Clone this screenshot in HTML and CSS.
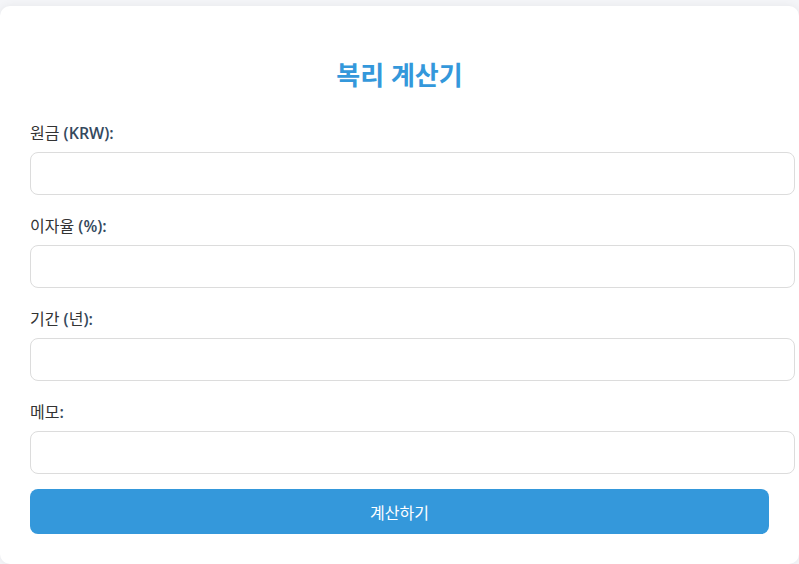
FILE: index.html
```html
<!DOCTYPE html>
<html lang="ko">
<head>
<meta charset="utf-8">
<title>복리 계산기</title>
<link rel="stylesheet" href="styles.css">
</head>
<body>
<div class="card">
  <h2 class="title">복리 계산기</h2>
  <form class="form">
    <div class="field">
      <label class="label" for="principal"><span class="ko">원금</span> (KRW):</label>
      <input class="input" id="principal" type="number">
    </div>
    <div class="field">
      <label class="label" for="rate"><span class="ko">이자율</span> (%):</label>
      <input class="input" id="rate" type="number">
    </div>
    <div class="field">
      <label class="label" for="years"><span class="ko">기간</span> (<span class="ko">년</span>):</label>
      <input class="input" id="years" type="number">
    </div>
    <div class="field field-last">
      <label class="label" for="memo"><span class="ko">메모</span>:</label>
      <input class="input" id="memo" type="text">
    </div>
    <button class="button" type="button">계산하기</button>
  </form>
</div>
</body>
</html>
```
FILE: styles.css
```css
html, body {
  margin: 0;
  padding: 0;
}
body {
  background: #f4f5f8;
  font-family: "Open Sans", "Noto Sans CJK KR", sans-serif;
  color: #333;
  padding-top: 6px;
}
.card {
  background: #fff;
  max-width: 800px;
  margin: 0 auto;
  padding: 30px 30px 30px;
  border-radius: 10px;
  box-shadow: 0 0 8px rgba(0, 0, 0, 0.06);
  box-sizing: border-box;
}
.title {
  margin: 22px 0 30px;
  text-align: center;
  color: #3498db;
  font-size: 26px;
  font-weight: 700;
  line-height: 35px;
}
.form {
  margin: 0;
}
.field {
  margin-bottom: 21px;
}
.field-last {
  margin-bottom: 15px;
}
.label {
  display: block;
  font-size: 16px;
  line-height: 21px;
  font-weight: 600;
  color: #34495e;
  margin-bottom: 8px;
}
.ko {
  font-weight: 400;
  color: #333;
}
.input {
  display: block;
  width: 100%;
  padding: 12px;
  border: 1px solid #dcdcdc;
  border-radius: 8px;
  font-size: 14px;
  line-height: 17px;
  height: 17px;
  font-family: inherit;
  background: #fff;
  outline: none;
}
.button {
  display: block;
  width: 100%;
  height: 45px;
  border: none;
  border-radius: 8px;
  background: #3498db;
  color: #fff;
  font-size: 16px;
  font-family: inherit;
  cursor: pointer;
}
```
